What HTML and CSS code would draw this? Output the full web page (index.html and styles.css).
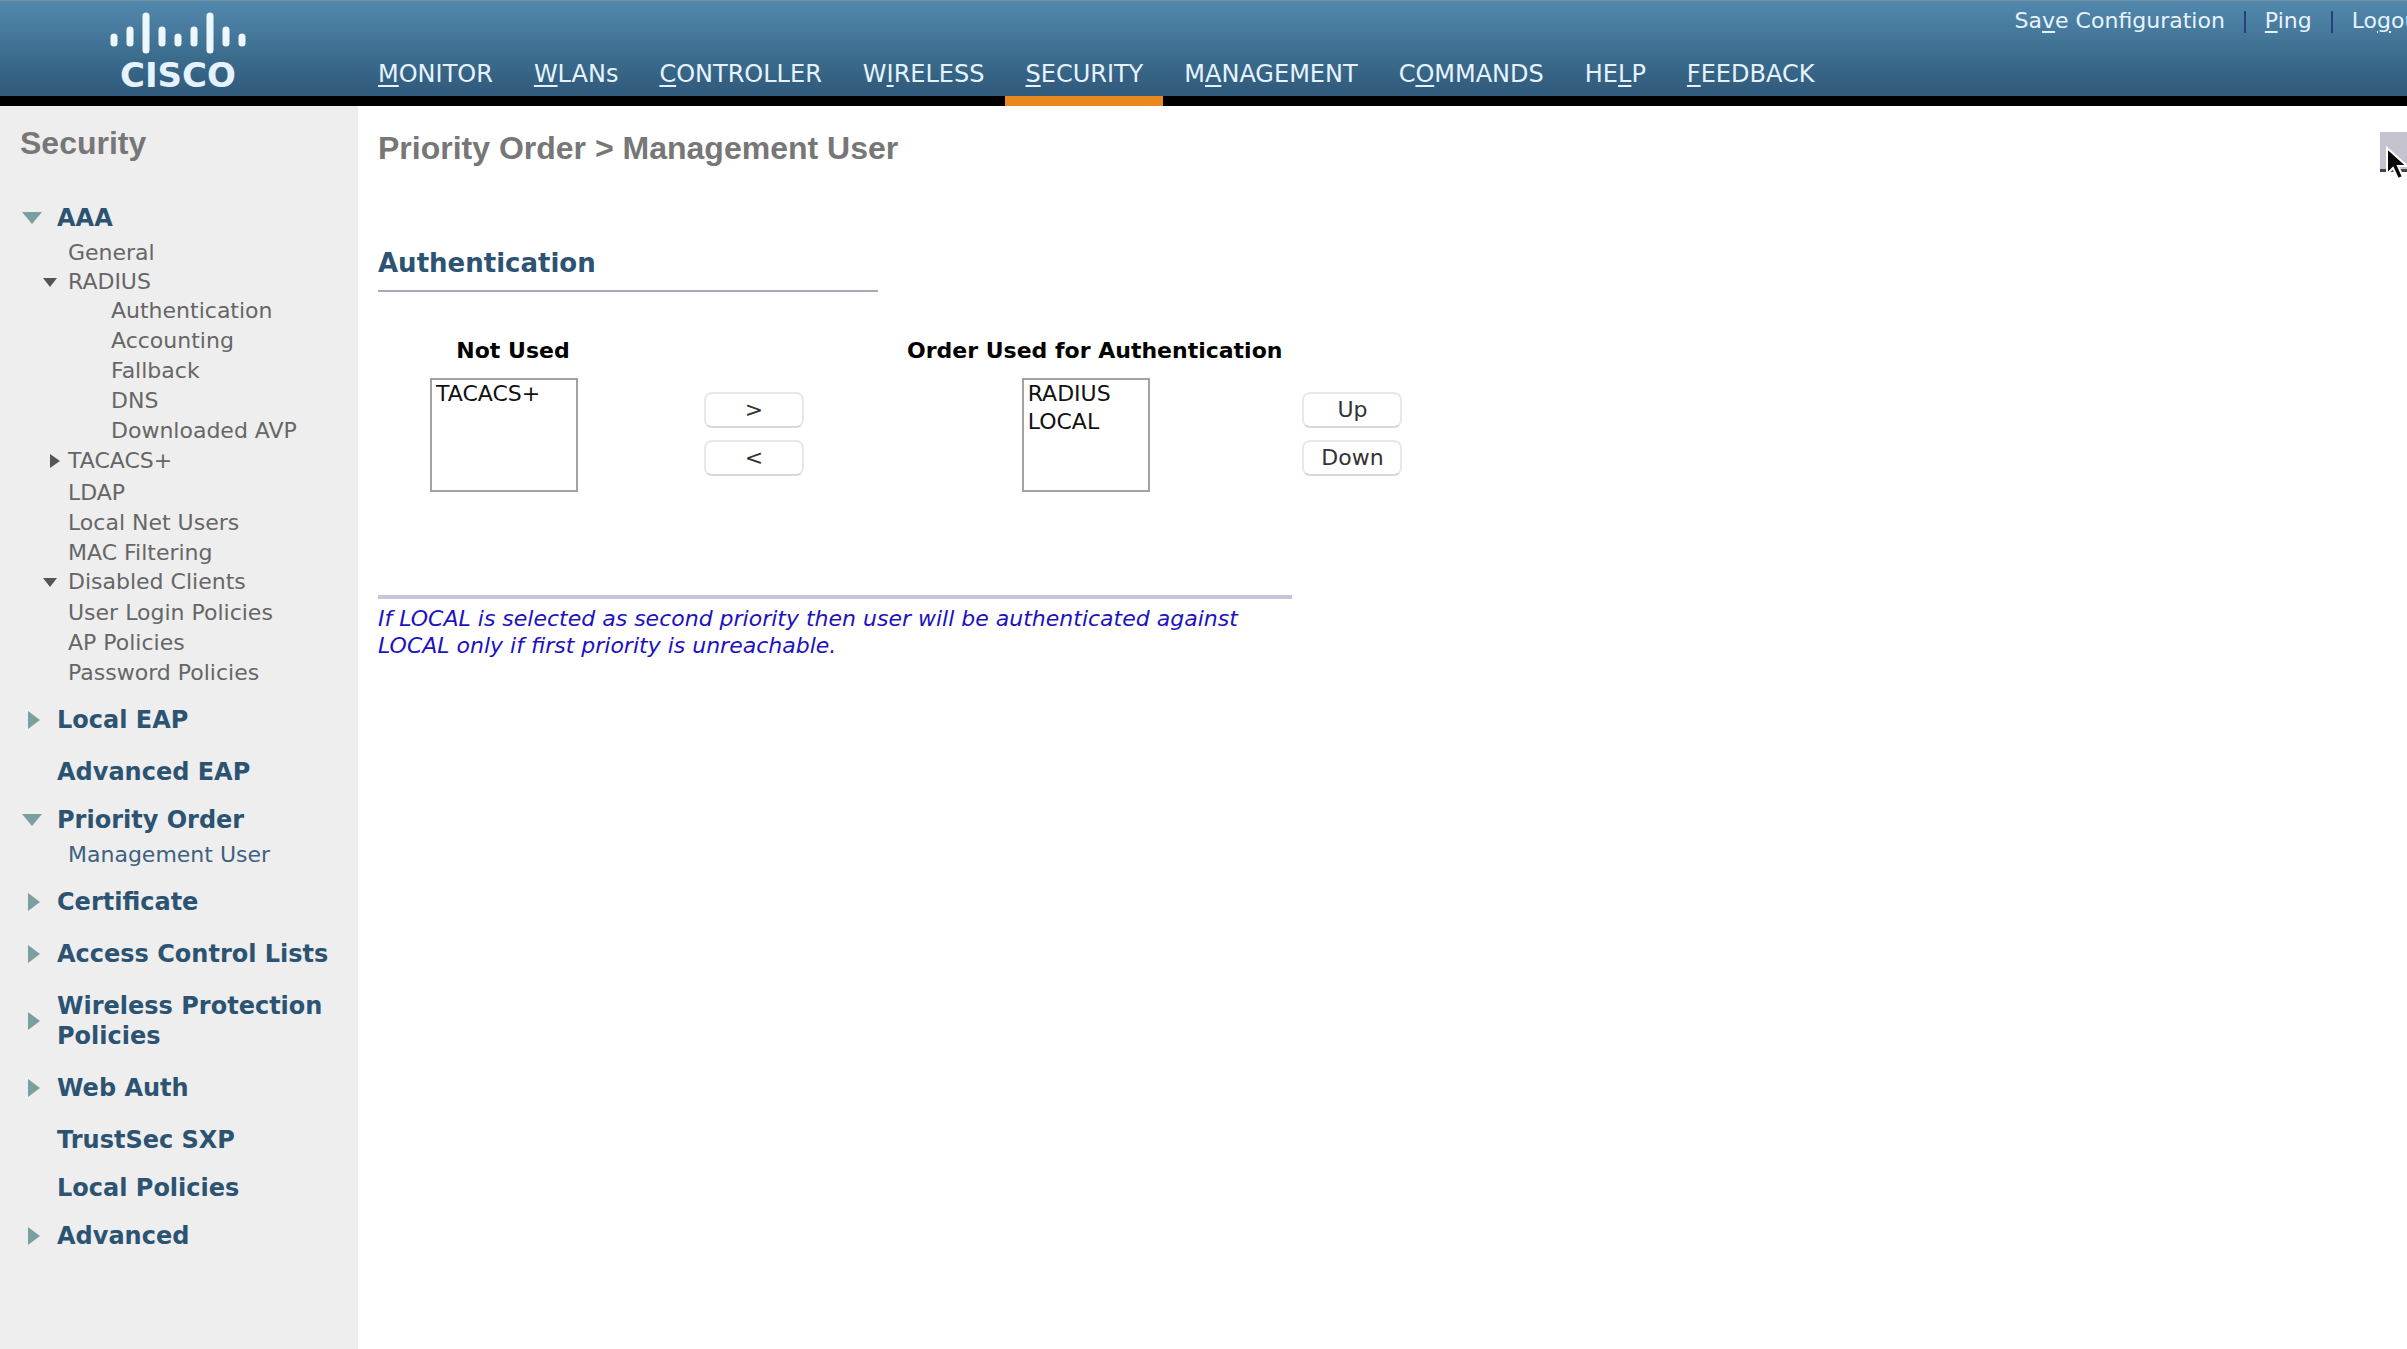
FILE: index.html
```html
<!DOCTYPE html>
<html lang="en">
<head>
<meta charset="utf-8">
<title>Security - Priority Order</title>
<link rel="stylesheet" href="styles.css">
</head>
<body>
<header class="header">
  <a class="logo" href="#" aria-label="Cisco home">
    <svg class="logo-bars" viewBox="0 0 136 42" width="136" height="42" aria-hidden="true">
      <g stroke="#eef7ff" stroke-width="7" stroke-linecap="round">
        <path d="M4 25v6M20 18v13M36 4v34M52 18v13M68 25v6M84 18v13M100 4v34M116 18v13M132 25v6"/>
      </g>
    </svg>
    <span class="logo-name">CISCO</span>
  </a>
  <div class="header-main">
    <div class="utility">
      <a href="#">Sa<u>v</u>e Configuration</a>
      <a href="#"><u>P</u>ing</a>
      <a href="#">Lo<u>g</u>out</a>
    </div>
    <nav class="nav">
      <a href="#"><u>M</u>ONITOR</a>
      <a href="#"><u>W</u>LANs</a>
      <a href="#"><u>C</u>ONTROLLER</a>
      <a href="#">W<u>I</u>RELESS</a>
      <a class="active" href="#"><u>S</u>ECURITY</a>
      <a href="#">M<u>A</u>NAGEMENT</a>
      <a href="#">C<u>O</u>MMANDS</a>
      <a href="#">HE<u>L</u>P</a>
      <a href="#"><u>F</u>EEDBACK</a>
    </nav>
  </div>
</header>
<div class="page">
  <aside class="sidebar">
    <h2 class="sidebar-title">Security</h2>
    <ul class="menu">
      <li>
        <a class="top open" href="#">AAA</a>
        <ul class="sub">
          <li><a href="#">General</a></li>
          <li><a class="branch open raised" href="#">RADIUS</a>
            <ul class="leaf">
              <li><a href="#">Authentication</a></li>
              <li><a href="#">Accounting</a></li>
              <li><a href="#">Fallback</a></li>
              <li><a href="#">DNS</a></li>
              <li><a href="#">Downloaded AVP</a></li>
            </ul>
          </li>
          <li><a class="branch closed" href="#">TACACS+</a></li>
          <li><a href="#">LDAP</a></li>
          <li><a href="#">Local Net Users</a></li>
          <li><a href="#">MAC Filtering</a></li>
          <li><a class="branch open" href="#">Disabled Clients</a></li>
          <li><a href="#">User Login Policies</a></li>
          <li><a href="#">AP Policies</a></li>
          <li><a href="#">Password Policies</a></li>
        </ul>
      </li>
      <li><a class="top closed" href="#">Local EAP</a></li>
      <li><a class="top" href="#">Advanced EAP</a></li>
      <li>
        <a class="top open" href="#">Priority Order</a>
        <ul class="sub">
          <li><a class="current" href="#">Management User</a></li>
        </ul>
      </li>
      <li><a class="top closed" href="#">Certificate</a></li>
      <li><a class="top closed" href="#">Access Control Lists</a></li>
      <li><a class="top closed" href="#">Wireless Protection Policies</a></li>
      <li><a class="top closed" href="#">Web Auth</a></li>
      <li><a class="top" href="#">TrustSec SXP</a></li>
      <li><a class="top" href="#">Local Policies</a></li>
      <li><a class="top closed" href="#">Advanced</a></li>
    </ul>
  </aside>
  <main class="content">
    <h1 class="page-title">Priority Order &gt; Management User</h1>
    <button class="apply" type="button" aria-label="Apply"></button>
    <h2 class="section-title">Authentication</h2>
    <form class="picker">
      <div class="list">
        <label for="unused">Not Used</label>
        <select id="unused" class="unused" size="4">
          <option>TACACS+</option>
        </select>
      </div>
      <div class="moves">
        <button type="button">&gt;</button>
        <button type="button">&lt;</button>
      </div>
      <div class="list">
        <label for="used">Order Used for Authentication</label>
        <select id="used" class="used" size="4">
          <option>RADIUS</option>
          <option>LOCAL</option>
        </select>
      </div>
      <div class="order">
        <button type="button">Up</button>
        <button type="button">Down</button>
      </div>
    </form>
    <p class="note">If LOCAL is selected as second priority then user will be authenticated against LOCAL only if first priority is unreachable.</p>
  </main>
</div>
<svg class="pointer" viewBox="0 0 24 36" width="24" height="36" aria-hidden="true">
  <path d="M2 2v26l6-6 5 11 5-2-5-11h9z" fill="#0a0a0a" stroke="#fff" stroke-width="2"/>
</svg>
</body>
</html>
```
FILE: styles.css
```css
* { box-sizing: border-box; }

body {
  margin: 0;
  min-height: 100vh;
  display: flex;
  flex-direction: column;
  position: relative;
  overflow-x: hidden;
  background: #fff;
  color: #000;
  font: 22px/30px "DejaVu Sans", Verdana, sans-serif;
}

a { color: inherit; text-decoration: none; }
ul { margin: 0; padding: 0; list-style: none; }
h1, h2, p { margin: 0; }

/* Header */
.header {
  display: flex;
  height: 106px;
  border-top: 1px solid #7b8f9a;
  background: linear-gradient(#5388ae 0, #3b6d8d 55px, #30597b 95px, #000 95px);
  color: #e6f3ff;
}
.logo {
  flex: none;
  width: 358px;
  padding: 11px 0 0 110px;
}
.logo-bars { display: block; }
.logo-name {
  display: block;
  padding-left: 10px;
  font-size: 34px;
  font-weight: bold;
  line-height: 42px;
}
.header-main {
  flex: 1;
  display: flex;
  flex-direction: column;
  justify-content: space-between;
}
.utility {
  display: flex;
  justify-content: flex-end;
  margin-right: -40px;
  padding-top: 5px;
}
.utility a { padding: 0 20px; position: relative; white-space: nowrap; }
.utility a + a::before {
  content: "";
  position: absolute;
  left: -1px;
  top: 5px;
  width: 2px;
  height: 22px;
  background: #22437a;
}
.nav { display: flex; gap: 1px; font-size: 24px; }
.nav a { padding: 0 20px 7px; border-bottom: 10px solid transparent; }
.nav .active { border-bottom-color: #ea871e; }
u { text-underline-offset: 3px; text-decoration-thickness: 2px; }

/* Page columns */
.page { flex: 1; display: flex; }
.sidebar {
  flex: none;
  width: 358px;
  padding-bottom: 60px;
  background: #eee;
}
.sidebar-title, .page-title {
  font: bold 32px/36px "Liberation Sans", Arial, sans-serif;
  color: #777;
}
.sidebar-title { padding: 19px 20px 31px; }
.page-title { padding-top: 24px; }

/* Sidebar menu */
.top {
  display: flex;
  align-items: center;
  position: relative;
  padding: 11px 20px 7px 57px;
  font-size: 24px;
  font-weight: bold;
  color: #2c5472;
}
.top.closed { padding-bottom: 11px; }
.top.open { padding-bottom: 5px; }
.top::before, .branch::before {
  content: "";
  position: absolute;
}
.top.closed::before {
  left: 28px;
  border: solid transparent;
  border-width: 9px 0 9px 12px;
  border-left-color: #7a9f9f;
}
.top.open::before {
  left: 22px;
  border: solid transparent;
  border-width: 12px 10px 0;
  border-top-color: #7a9f9f;
}
.sub { margin-bottom: 6px; color: #666; }
.sub a { display: block; padding-left: 68px; }
.sub .leaf a { padding-left: 111px; }
.sub .current { color: #3f6180; }
.sub .branch {
  position: relative;
  display: flex;
  align-items: center;
  padding-bottom: 2px;
  line-height: 28px;
}
.sub .raised { padding-bottom: 0; }
.sub .branch.closed { line-height: 30px; }
.branch.open::before {
  left: 43px;
  border: solid transparent;
  border-width: 9px 7px 0;
  border-top-color: #555;
}
.branch.closed::before {
  left: 50px;
  border: solid transparent;
  border-width: 7px 0 7px 10px;
  border-left-color: #555;
}

/* Content */
.content { flex: 1; position: relative; padding-left: 20px; }
.section-title {
  width: 500px;
  padding-top: 82px;
  padding-bottom: 12px;
  border-bottom: 2px solid #a9a9bb;
  font-size: 26px;
  line-height: 30px;
  color: #2c5472;
}
.picker { display: flex; padding: 44px 0 0 52px; }
.list { display: flex; flex-direction: column; align-items: center; }
.list label {
  padding: 0 0 12px 18px;
  font-weight: bold;
  white-space: nowrap;
}
select {
  height: 114px;
  padding: 1px 0;
  border: 2px solid #a2a2a2;
  border-radius: 0;
  background: #fff;
  color: #111;
  font: inherit;
  overflow: hidden;
}
.unused { width: 148px; }
.used { width: 128px; }
option { padding: 0 4px; min-height: 28px; line-height: 28px; }
.moves, .order {
  display: flex;
  flex-direction: column;
  gap: 12px;
  padding-top: 56px;
}
.moves { margin: 0 85px 0 126px; }
.order { margin-left: 20px; }
.moves button, .order button {
  width: 100px;
  height: 36px;
  padding: 0;
  border: 2px solid #e8e8e8;
  border-bottom-color: #d8d8d8;
  border-radius: 8px;
  background: #fff;
  color: #333;
  font: inherit;
}
.note {
  width: 914px;
  margin-top: 103px;
  padding-top: 6px;
  border-top: 4px solid #c6c6d8;
  color: #1c12c0;
  font-style: italic;
  line-height: 27px;
}
.apply {
  position: absolute;
  top: 26px;
  right: -73px;
  width: 100px;
  height: 40px;
  border: 0;
  border-bottom: 3px solid #444;
  background: #c5c3d0;
}
.pointer { position: absolute; top: 146px; right: -2px; }
```
